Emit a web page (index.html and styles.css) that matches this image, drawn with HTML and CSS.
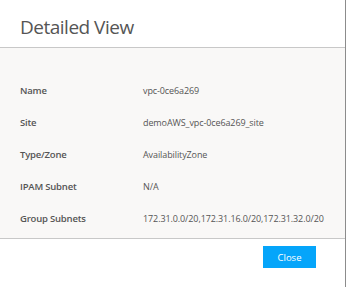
FILE: index.html
```html
<!DOCTYPE html>
<html lang="en">
<head>
  <meta charset="UTF-8" />
  <meta name="viewport" content="width=device-width, initial-scale=1.0" />
  <title>Detailed View</title>
  <link rel="stylesheet" href="styles.css">
</head>
<body>

  <div class="modal">
    <header class="modal-header">
      <h2>Detailed View</h2>
    </header>

    <!-- Details -->
    <section class="modal-body">
      <div class="row">
        <span class="label">Name</span>
        <span class="value">vpc-0ce6a269</span>
      </div>
      <div class="row">
        <span class="label">Site</span>
        <span class="value">demoAWS_vpc-0ce6a269_site</span>
      </div>
      <div class="row">
        <span class="label">Type/Zone</span>
        <span class="value">AvailabilityZone</span>
      </div>
      <div class="row">
        <span class="label">IPAM Subnet</span>
        <span class="value">N/A</span>
      </div>
      <div class="row">
        <span class="label">Group Subnets</span>
        <span class="value">172.31.0.0/20,172.31.16.0/20,172.31.32.0/20</span>
      </div>
    </section>

    <footer class="modal-footer">
      <button class="btn-close">Close</button>
    </footer>
  </div>

</body>
</html>
```

FILE: styles.css
```css
* { margin: 0; padding: 0; box-sizing: border-box; }
body {
  background: #fff;
  color: #555;
  font-family: 'Open Sans', sans-serif;
}

.modal {
  width: 346px;
  height: 287px;
  background: #fff;
  border-right: 1px solid #8c8c8c;
}

.modal-header {
  height: 48px;
  padding: 14px 20px 0;
  border-bottom: 1px solid #c8c8c8;
}
.modal-header h2 {
  font-size: 19px;
  font-weight: 400;
  letter-spacing: -0.5px;
  line-height: 27px;
  color: #555;
}

.modal-body {
  background: #f9f8f7;
  padding: 26px 0 4px 20px;
  border-bottom: 1px solid #c8c8c8;
}
.row {
  display: grid;
  grid-template-columns: 123px 1fr;
  height: 32px;
  align-items: center;
}
.label {
  font-size: 9.5px;
  font-weight: 600;
  letter-spacing: -0.2px;
  color: #555;
}
.value {
  font-size: 9px;
  letter-spacing: -0.1px;
  color: #555;
  white-space: nowrap;
}

.modal-footer {
  display: flex;
  justify-content: flex-end;
  padding: 7px 29px 0 0;
}
.btn-close {
  width: 53px;
  height: 22px;
  background: #05a5fa;
  color: #fff;
  border: none;
  font-family: 'Open Sans', sans-serif;
  font-size: 9.5px;
  cursor: pointer;
}
```
